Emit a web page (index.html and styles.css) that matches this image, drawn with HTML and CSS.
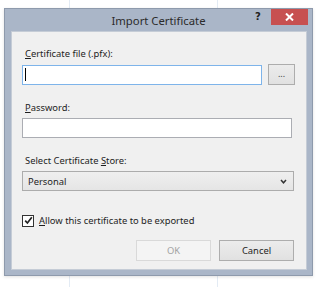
FILE: index.html
```html
<!DOCTYPE html>
<html lang="en">
<head>
  <meta charset="UTF-8" />
  <title>Import Certificate</title>
  <link rel="stylesheet" href="styles.css">
</head>
<body>
  <div class="dialog">
    <div class="titlebar">
      <span></span>
      <div class="title">Import Certificate</div>
      <div class="controls">
        <span class="help">?</span>
        <span class="close">
          <svg width="9" height="8" viewBox="0 0 9 8"><path d="M1 0.5 L8 7.5 M8 0.5 L1 7.5" stroke="#fff" stroke-width="2"/></svg>
        </span>
      </div>
    </div>
    <div class="content">
      <label class="field-label"><u>C</u>ertificate file (.pfx):</label>
      <div class="file-row">
        <div class="input focused"><span class="caret"></span></div>
        <button class="btn browse">...</button>
      </div>

      <label class="field-label gap"><u>P</u>assword:</label>
      <div class="input wide"></div>

      <label class="field-label gap">Select Certificate <u>S</u>tore:</label>
      <div class="select">
        <span>Personal</span>
        <svg width="7" height="5" viewBox="0 0 7 5"><path d="M1 1 L3.5 3.8 L6 1" stroke="#333" stroke-width="1.5" fill="none"/></svg>
      </div>

      <div class="check-row">
        <span class="checkbox">
          <svg width="9" height="9" viewBox="0 0 9 9"><path d="M1.2 4.6 L3.4 7 L7.8 1.2" stroke="#222" stroke-width="1.7" fill="none"/></svg>
        </span>
        <span><u>A</u>llow this certificate to be exported</span>
      </div>

      <div class="actions">
        <button class="btn disabled">OK</button>
        <button class="btn">Cancel</button>
      </div>
    </div>
  </div>
</body>
</html>
```

FILE: styles.css
```css
/* base */
* { margin: 0; padding: 0; box-sizing: border-box; }
body {
  font-family: "Noto Sans", "Open Sans", sans-serif;
  font-size: 9.4px;
  color: #1e1e1e;
  background-color: #fff;
  background-image:
    linear-gradient(to right, transparent 69px, #e3ebf4 69px, #e3ebf4 70px, transparent 70px),
    linear-gradient(to right, transparent 217px, #e3ebf4 217px, #e3ebf4 218px, transparent 218px);
  width: 320px;
  height: 287px;
  overflow: hidden;
}

/* window frame */
.dialog {
  width: 309px;
  margin: 8px 0 0 4px;
  background: #aab6c8;
  border: 1px solid #8e9aac;
  padding: 0 5px 5px 6px;
  box-shadow: 0 1px 3px rgba(0, 0, 0, 0.12);
}
.titlebar {
  display: grid;
  grid-template-columns: 1fr auto 1fr;
  align-items: start;
  height: 22px;
  margin: 0 -5px 0 -6px;
}
.title {
  font-size: 11.3px;
  color: #2b2b2b;
  line-height: 22px;
  padding-top: 1px;
}
.controls { display: flex; justify-self: end; align-items: flex-start; }
.help {
  font-family: "DejaVu Sans", sans-serif;
  font-weight: bold;
  font-size: 10px;
  color: #222;
  width: 16px;
  line-height: 14px;
  padding-top: 1px;
  text-align: left;
}
.close {
  width: 37px;
  height: 16px;
  background: #c75050;
  margin-right: 4px;
  display: flex;
  align-items: center;
  justify-content: center;
}

/* content panel */
.content {
  background: #f0f0f0;
  border: 1px solid #c5ccd6;
  height: 239px;
  padding: 14px 0 0 10px;
}
.field-label {
  display: block;
  line-height: 16px;
  margin: 0 0 2px 3px;
}
.field-label.gap { margin-top: 15px; }
.field-label u, .check-row u { text-decoration: underline; text-underline-offset: 1px; }

.file-row { display: flex; align-items: center; gap: 6px; }
.input {
  width: 240px;
  height: 20px;
  background: #fff;
  border: 1px solid #abadb3;
  display: flex;
  align-items: center;
  padding-left: 2px;
}
.input.focused { border-color: #7eb4ea; }
.input.wide { width: 270px; margin-top: 1px; }
.caret { width: 1px; height: 13px; background: #000; }

.btn {
  font-family: inherit;
  font-size: 9.4px;
  color: #1e1e1e;
  background: linear-gradient(#ececec, #e1e1e1);
  border: 1px solid #adadad;
  height: 21px;
}
.browse { width: 27px; font-size: 9px; line-height: 9px; color: #444; padding-bottom: 2px; }

.select {
  width: 272px;
  height: 20px;
  margin-top: 2px;
  border: 1px solid #acacac;
  background: linear-gradient(#efefef, #e5e5e5);
  display: flex;
  align-items: center;
  justify-content: space-between;
  padding: 0 6px 0 5px;
}

.check-row {
  display: flex;
  align-items: center;
  gap: 5px;
  margin-top: 21px;
  line-height: 17px;
}
.checkbox {
  width: 12px;
  height: 12px;
  border: 1px solid #333;
  background: #fff;
  display: flex;
  align-items: center;
  justify-content: center;
}

.actions {
  display: flex;
  justify-content: flex-end;
  gap: 8px;
  margin: 11px 12px 0 0;
}
.actions .btn { width: 75px; }
.btn.disabled { color: #a3a3a3; border-color: #d9d9d9; background: #f4f4f4; }
```
